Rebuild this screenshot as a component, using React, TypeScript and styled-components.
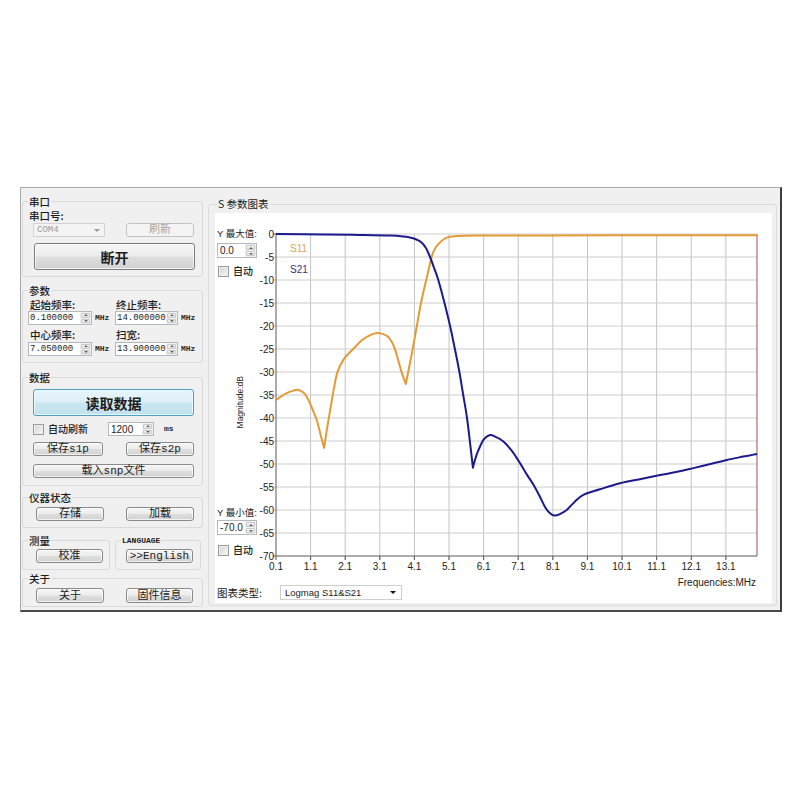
import React from 'react';
import styled, { createGlobalStyle, css } from 'styled-components';

const CJK = `"Noto Sans CJK SC", "Liberation Sans", sans-serif`;
const MONO = `"Liberation Mono", "Noto Sans CJK SC", monospace`;
const SANS = `"Liberation Sans", "Noto Sans CJK SC", sans-serif`;

const GlobalStyle = createGlobalStyle`
  html, body { margin: 0; padding: 0; background: #ffffff; }
  body { font-family: ${CJK}; font-size: 11px; color: #1c1c1c; }
  *, *::before, *::after { box-sizing: border-box; }
`;

const Page = styled.div`
  width: 800px;
  height: 800px;
  padding: 187px 0 0 20px;
`;

const Window = styled.div`
  display: flex;
  width: 762px;
  height: 425px;
  background: #f0f0f0;
  border: 1px solid #a9a9a9;
  border-right: 2px solid #3d3d3d;
  border-bottom: 2px solid #4a4a4a;
`;

const LeftPanel = styled.div`
  width: 184px;
  flex: none;
  display: flex;
  flex-direction: column;
  padding: 0 2px 0 1px;
`;

const Group = styled.fieldset<{ $mt?: number; $pb: number; $w?: number }>`
  margin: ${p => p.$mt ?? 0}px 0 0;
  padding: 0 6px ${p => p.$pb}px 5px;
  border: 1px solid #dadada;
  border-radius: 3px;
  min-width: 0;
  ${p => p.$w && css`width: ${p.$w}px; flex: none;`}
`;

const Legend = styled.legend<{ $latin?: boolean }>`
  padding: 0 1px;
  font: 500 10.5px/13px ${CJK};
  color: #1c1c1c;
  ${p => p.$latin && css`
    font: bold 8px/13px "Liberation Mono", monospace;
  `}
`;

const FieldLabel = styled.span<{ $mt?: number; $pl?: number }>`
  display: block;
  margin-top: ${p => p.$mt ?? 0}px;
  padding-left: ${p => p.$pl ?? 1}px;
  font: 500 10.5px/13px ${CJK};
  white-space: nowrap;
`;

const ButtonRow = styled.div<{ $mt: number; $pl: number; $pr: number }>`
  display: flex;
  justify-content: space-between;
  align-items: center;
  margin-top: ${p => p.$mt}px;
  padding: 0 ${p => p.$pr}px 0 ${p => p.$pl}px;
`;

type Variant = 'normal' | 'big' | 'focus' | 'disabled';

const PushButton = styled.button<{ $w: number; $h?: number; $ml?: number; $mt?: number; $variant?: Variant }>`
  display: flex;
  align-items: center;
  justify-content: center;
  width: ${p => p.$w}px;
  height: ${p => p.$h ?? 14}px;
  margin: ${p => p.$mt ?? 0}px 0 0 ${p => p.$ml ?? 0}px;
  padding: 0;
  border: 1px solid #8a8a8a;
  border-radius: 3px;
  background: linear-gradient(#f6f6f6 0%, #ececec 48%, #dedede 52%, #d2d2d2 100%);
  box-shadow: inset 0 0 0 1px rgba(255, 255, 255, 0.7);
  font: 11px/12px ${MONO};
  color: #1c1c1c;
  white-space: nowrap;
  ${p => p.$variant === 'big' && css`
    font: bold 14px/16px ${CJK};
    border-color: #7c7c7c;
  `}
  ${p => p.$variant === 'focus' && css`
    font: bold 14px/16px ${CJK};
    border-color: #4f9fc0;
    background: linear-gradient(#e8f5fa 0%, #dcf0f7 48%, #cbe7f1 52%, #c0e1ec 100%);
    box-shadow: inset 0 0 0 1px #eaf8fc;
  `}
  ${p => p.$variant === 'disabled' && css`
    border-color: #c3c3c3;
    background: #f4f4f4;
    color: #a6a6a6;
    box-shadow: none;
  `}
`;

const Combo = styled.div<{ $w: number; $disabled?: boolean }>`
  display: flex;
  align-items: center;
  justify-content: space-between;
  width: ${p => p.$w}px;
  height: 14px;
  padding: 0 4px 0 3px;
  border: 1px solid ${p => (p.$disabled ? '#d2d2d2' : '#cfcfcf')};
  background: ${p => (p.$disabled ? '#f4f4f4' : '#ffffff')};
  color: ${p => (p.$disabled ? '#9a9a9a' : '#1c1c1c')};
  font: 9px/12px ${MONO};
`;

const ComboArrow = styled.span<{ $disabled?: boolean }>`
  width: 0;
  height: 0;
  border-left: 3px solid transparent;
  border-right: 3px solid transparent;
  border-top: 3px solid ${p => (p.$disabled ? '#9a9a9a' : '#111')};
`;

const Dropdown = styled(Combo)`
  height: 15px;
  padding: 0 5px 0 4px;
  font: 9.5px/13px ${SANS};
  color: #1c1c1c;
`;

const ParamGrid = styled.div`
  display: grid;
  grid-template-columns: 80px 81px;
  column-gap: 7px;
`;

const UnitRow = styled.div<{ $mt?: number }>`
  display: flex;
  align-items: center;
  gap: 3px;
  margin-top: ${p => p.$mt ?? 0}px;
`;

const Unit = styled.span<{ $ml?: number }>`
  margin-left: ${p => p.$ml ?? 0}px;
  font: bold 8px/10px "Liberation Mono", monospace;
  color: #2a2a2a;
`;

const Spin = styled.div<{ $w: number; $h?: number }>`
  display: flex;
  width: ${p => p.$w}px;
  height: ${p => p.$h ?? 14}px;
  background: #ffffff;
  border: 1px solid #b4b8bf;
  flex: none;
`;

const SpinValue = styled.span<{ $mono?: boolean }>`
  flex: 1;
  padding-left: ${p => (p.$mono ? 1 : 2)}px;
  display: flex;
  align-items: center;
  overflow: hidden;
  white-space: nowrap;
  font: ${p => (p.$mono ? `9px ${MONO}` : `10px ${SANS}`)};
  color: #1c1c1c;
`;

const SpinButtons = styled.span`
  width: 11px;
  flex: none;
  display: flex;
  flex-direction: column;
  gap: 1px;
  padding: 1px;
  background: #f0f0f0;
`;

const SpinHalf = styled.span<{ $down?: boolean }>`
  flex: 1;
  display: flex;
  align-items: center;
  justify-content: center;
  border: 1px solid #c8c8c8;
  border-radius: 1px;
  background: linear-gradient(#f8f8f8, #e2e2e2);
  &::after {
    content: '';
    border-left: 2px solid transparent;
    border-right: 2px solid transparent;
    ${p => (p.$down ? 'border-top' : 'border-bottom')}: 2px solid #666;
  }
`;

const CheckRow = styled.div<{ $mt: number; $pl: number }>`
  display: flex;
  align-items: center;
  margin-top: ${p => p.$mt}px;
  padding-left: ${p => p.$pl}px;
  height: 14px;
`;

const CheckBox = styled.span`
  width: 11px;
  height: 11px;
  flex: none;
  border: 1px solid #9a9a9a;
  background: linear-gradient(135deg, #d4d4d4, #f7f7f7);
  box-shadow: inset 0 0 0 1px #efefef;
`;

const CheckText = styled.span<{ $w?: number }>`
  margin-left: 4px;
  ${p => p.$w && css`width: ${p.$w}px;`}
  font: 500 10px/14px ${CJK};
  white-space: nowrap;
`;

const Split = styled.div`
  display: flex;
  gap: 5px;
  margin-top: 6px;
`;

const RightPanel = styled.div`
  flex: 1;
  display: flex;
  align-items: flex-start;
  padding: 9px 3px 0;
`;

const ChartGroup = styled.fieldset`
  flex: 1;
  min-width: 0;
  margin: 0;
  padding: 2px 4px 2px 6px;
  border: 1px solid #dcdcdc;
  border-radius: 3px;
`;

const ChartLegend = styled.legend`
  margin-left: 2px;
  padding: 0 1px;
  font: 10.5px/14px ${CJK};
  color: #1c1c1c;
`;

const ChartArea = styled.div`
  height: 390px;
  background: #ffffff;
  display: flex;
  flex-direction: column;
`;

const ChartBody = styled.div`
  display: flex;
  height: 372px;
`;

const SideColumn = styled.div`
  width: 44px;
  flex: none;
  display: flex;
  flex-direction: column;
  padding: 14px 0 28px 2px;
`;

const AxisBlock = styled.div<{ $gap: number }>`
  display: flex;
  flex-direction: column;
  gap: ${p => p.$gap}px;
`;

const AxisCaption = styled.span`
  font: 9.5px/14px ${SANS};
  white-space: nowrap;
`;

const AxisTitleWrap = styled.div`
  flex: 1;
  display: flex;
  align-items: center;
  justify-content: center;
  padding: 20px 0 0 4px;
`;

const AxisTitle = styled.span`
  writing-mode: vertical-rl;
  transform: rotate(180deg);
  font: 8.5px ${SANS};
  color: #2a2a2a;
`;

const ChartSvg = styled.svg`
  flex: none;
  overflow: visible;
  text {
    font-family: ${SANS};
    font-size: 10px;
    fill: #222;
  }
`;

const BottomRow = styled.div`
  display: flex;
  align-items: center;
  height: 18px;
  padding: 0 0 3px 2px;
`;

const TypeLabel = styled.span`
  width: 63px;
  font: 10.5px/14px ${CJK};
`;

/* ---- chart data ---- */

const PL = 17;
const PT = 21;
const PW = 481;
const PH = 322;
const sx = (f: number) => PL + ((f - 0.1) / 13.9) * PW;
const sy = (db: number) => PT + (-db / 70) * PH;

type Pt = [number, number, boolean?];

const S11: Pt[] = [
  [0.1, -36.1], [0.25, -35.3], [0.41, -34.6], [0.58, -34.1], [0.74, -33.9], [0.9, -34.5],
  [1.02, -35.8], [1.15, -38], [1.28, -40.5], [1.4, -44], [1.49, -46.5, true], [1.56, -43],
  [1.65, -39], [1.76, -34.2], [1.87, -30.2], [2.05, -27.3], [2.33, -25], [2.6, -23],
  [2.85, -21.9], [3.05, -21.5], [3.3, -22.1], [3.45, -23.5], [3.55, -25.3], [3.63, -27.4],
  [3.74, -30.3], [3.85, -32.6, true], [3.92, -30], [4.05, -25], [4.17, -20], [4.29, -15],
  [4.44, -10], [4.6, -5], [4.68, -3.4], [4.79, -2.2], [5.03, -0.8], [5.33, -0.45],
  [6, -0.35], [8, -0.3], [11, -0.28], [14, -0.27],
];

const S21: Pt[] = [
  [0.1, 0], [1.5, -0.08], [2.5, -0.2], [3.4, -0.35], [3.8, -0.55], [4.0, -0.8], [4.16, -1.2],
  [4.3, -1.8], [4.43, -3], [4.55, -5], [4.67, -7.4], [4.79, -10], [4.97, -15], [5.13, -20],
  [5.27, -25], [5.4, -30], [5.51, -35], [5.62, -40], [5.71, -45.5], [5.79, -50.8, true],
  [5.87, -48.6], [5.95, -47], [6.1, -44.7], [6.28, -43.7], [6.45, -44.1], [6.67, -45.1],
  [6.9, -47], [7.15, -49.8], [7.35, -52.3], [7.54, -54.5], [7.72, -57], [7.87, -59.3],
  [8.0, -60.6], [8.14, -61.2], [8.3, -60.9], [8.5, -60], [8.72, -58.3], [8.98, -56.7],
  [9.46, -55.5], [10.04, -54.2], [10.62, -53.3], [11.2, -52.4], [11.7, -51.7], [12.16, -50.9],
  [12.65, -50], [13.13, -49.1], [13.6, -48.4], [14, -47.8],
];

const smoothPath = (pts: Pt[]) => {
  const p = pts.map(([f, d, s]) => ({ x: sx(f), y: sy(d), s: !!s }));
  const tan = (i: number) => {
    if (p[i].s) return { x: 0, y: 0 };
    const a = p[Math.max(i - 1, 0)];
    const b = p[Math.min(i + 1, p.length - 1)];
    return { x: (b.x - a.x) / 6, y: (b.y - a.y) / 6 };
  };
  const n = (v: number) => v.toFixed(1);
  let d = `M${n(p[0].x)} ${n(p[0].y)}`;
  for (let i = 0; i < p.length - 1; i++) {
    const t1 = tan(i);
    const t2 = tan(i + 1);
    d += ` C${n(p[i].x + t1.x)} ${n(p[i].y + t1.y)} ${n(p[i + 1].x - t2.x)} ${n(p[i + 1].y - t2.y)} ${n(p[i + 1].x)} ${n(p[i + 1].y)}`;
  }
  return d;
};

const xTicks = Array.from({ length: 14 }, (_, i) => 0.1 + i);
const yTicks = Array.from({ length: 15 }, (_, i) => -5 * i);

const Chart = () => {
  const bottom = PT + PH;
  const right = PL + PW;
  return (
    <ChartSvg width={513} height={372} viewBox="0 0 513 372">
      {xTicks.slice(1).map(f => (
        <line key={f} x1={sx(f)} y1={PT} x2={sx(f)} y2={bottom + 4} stroke="#c4c4c4" />
      ))}
      {yTicks.slice(1, -1).map(d => (
        <line key={d} x1={PL - 3} y1={sy(d)} x2={right} y2={sy(d)} stroke="#cdcdcd" />
      ))}
      <line x1={PL} y1={PT} x2={right} y2={PT} stroke="#cdcdcd" />
      <line x1={right} y1={PT} x2={right} y2={bottom} stroke="#9a5050" />
      <line x1={PL} y1={PT} x2={PL} y2={bottom} stroke="#5a5a5a" />
      <line x1={PL - 3} y1={bottom} x2={right} y2={bottom} stroke="#5a5a5a" />
      <line x1={PL - 3} y1={PT} x2={PL} y2={PT} stroke="#5a5a5a" />
      {xTicks.map(f => (
        <line key={`t${f}`} x1={sx(f)} y1={bottom} x2={sx(f)} y2={bottom + 4} stroke="#5a5a5a" />
      ))}
      <path d={smoothPath(S11)} fill="none" stroke="#e39b35" strokeWidth={2} strokeLinejoin="round" />
      <path d={smoothPath(S21)} fill="none" stroke="#1b1b8c" strokeWidth={2} strokeLinejoin="round" />
      <text x={31} y={39} style={{ fill: '#dfa458' }}>S11</text>
      <text x={31} y={59.5} style={{ fill: '#35357a' }}>S21</text>
      {yTicks.map(d => (
        <text key={`y${d}`} x={15} y={sy(d) + 3.5} textAnchor="end">{d}</text>
      ))}
      {xTicks.map(f => (
        <text key={`x${f}`} x={sx(f)} y={bottom + 14} textAnchor="middle">{f.toFixed(1)}</text>
      ))}
      <text x={497} y={373} textAnchor="end">Frequencies:MHz</text>
    </ChartSvg>
  );
};

const SpinField = ({ w, value, mono, h }: { w: number; value: string; mono?: boolean; h?: number }) => (
  <Spin $w={w} $h={h}>
    <SpinValue $mono={mono}>{value}</SpinValue>
    <SpinButtons>
      <SpinHalf />
      <SpinHalf $down />
    </SpinButtons>
  </Spin>
);

export default function App() {
  return (
    <>
      <GlobalStyle />
      <Page>
        <Window>
          <LeftPanel>
            <Group $mt={7} $pb={6}>
              <Legend>串口</Legend>
              <FieldLabel $pl={1} $mt={1}>串口号:</FieldLabel>
              <ButtonRow $mt={1} $pl={5} $pr={2}>
                <Combo $w={72} $disabled>
                  COM4
                  <ComboArrow $disabled />
                </Combo>
                <PushButton $w={68} $variant="disabled">刷新</PushButton>
              </ButtonRow>
              <PushButton $w={161} $h={27} $ml={6} $mt={6} $variant="big">断开</PushButton>
            </Group>

            <Group $mt={7} $pb={6}>
              <Legend>参数</Legend>
              <ParamGrid>
                <div>
                  <FieldLabel $pl={2} $mt={1}>起始频率:</FieldLabel>
                  <UnitRow>
                    <SpinField w={64} value="0.100000" mono />
                    <Unit>MHz</Unit>
                  </UnitRow>
                </div>
                <div>
                  <FieldLabel $pl={1} $mt={1}>终止频率:</FieldLabel>
                  <UnitRow>
                    <SpinField w={63} value="14.000000" mono />
                    <Unit>MHz</Unit>
                  </UnitRow>
                </div>
                <div>
                  <FieldLabel $pl={2} $mt={3}>中心频率:</FieldLabel>
                  <UnitRow $mt={1}>
                    <SpinField w={64} value="7.050000" mono />
                    <Unit>MHz</Unit>
                  </UnitRow>
                </div>
                <div>
                  <FieldLabel $pl={1} $mt={3}>扫宽:</FieldLabel>
                  <UnitRow $mt={1}>
                    <SpinField w={63} value="13.900000" mono />
                    <Unit>MHz</Unit>
                  </UnitRow>
                </div>
              </ParamGrid>
            </Group>

            <Group $mt={8} $pb={7}>
              <Legend>数据</Legend>
              <PushButton $w={161} $h={27} $ml={5} $mt={5} $variant="focus">读取数据</PushButton>
              <CheckRow $mt={6} $pl={5}>
                <CheckBox />
                <CheckText $w={60}>自动刷新</CheckText>
                <SpinField w={46} value="1200" />
                <Unit $ml={10}>ms</Unit>
              </CheckRow>
              <ButtonRow $mt={6} $pl={5} $pr={2}>
                <PushButton $w={70}>保存s1p</PushButton>
                <PushButton $w={68}>保存s2p</PushButton>
              </ButtonRow>
              <PushButton $w={161} $ml={5} $mt={8}>载入snp文件</PushButton>
            </Group>

            <Group $mt={5} $pb={6}>
              <Legend>仪器状态</Legend>
              <ButtonRow $mt={3} $pl={8} $pr={2}>
                <PushButton $w={68}>存储</PushButton>
                <PushButton $w={68}>加载</PushButton>
              </ButtonRow>
            </Group>

            <Split>
              <Group $pb={6} $w={88}>
                <Legend>测量</Legend>
                <ButtonRow $mt={2} $pl={8} $pr={0}>
                  <PushButton $w={67}>校准</PushButton>
                </ButtonRow>
              </Group>
              <Group $pb={6} $w={86}>
                <Legend $latin>LANGUAGE</Legend>
                <ButtonRow $mt={2} $pl={5} $pr={0}>
                  <PushButton $w={67}>&gt;&gt;English</PushButton>
                </ButtonRow>
              </Group>
            </Split>

            <Group $mt={2} $pb={3}>
              <Legend>关于</Legend>
              <ButtonRow $mt={3} $pl={8} $pr={3}>
                <PushButton $w={68} $h={15}>关于</PushButton>
                <PushButton $w={67} $h={15}>固件信息</PushButton>
              </ButtonRow>
            </Group>
          </LeftPanel>

          <RightPanel>
            <ChartGroup>
              <ChartLegend>S 参数图表</ChartLegend>
              <ChartArea>
                <ChartBody>
                  <SideColumn>
                    <AxisBlock $gap={2}>
                      <AxisCaption>Y 最大值:</AxisCaption>
                      <SpinField w={40} h={15} value="0.0" />
                      <CheckRow $mt={4} $pl={1}>
                        <CheckBox />
                        <CheckText>自动</CheckText>
                      </CheckRow>
                    </AxisBlock>
                    <AxisTitleWrap>
                      <AxisTitle>Magnitude:dB</AxisTitle>
                    </AxisTitleWrap>
                    <AxisBlock $gap={0}>
                      <AxisCaption>Y 最小值:</AxisCaption>
                      <SpinField w={40} h={15} value="-70.0" />
                      <CheckRow $mt={8} $pl={1}>
                        <CheckBox />
                        <CheckText>自动</CheckText>
                      </CheckRow>
                    </AxisBlock>
                  </SideColumn>
                  <Chart />
                </ChartBody>
                <BottomRow>
                  <TypeLabel>图表类型:</TypeLabel>
                  <Dropdown $w={122}>
                    Logmag S11&amp;S21
                    <ComboArrow />
                  </Dropdown>
                </BottomRow>
              </ChartArea>
            </ChartGroup>
          </RightPanel>
        </Window>
      </Page>
    </>
  );
}
